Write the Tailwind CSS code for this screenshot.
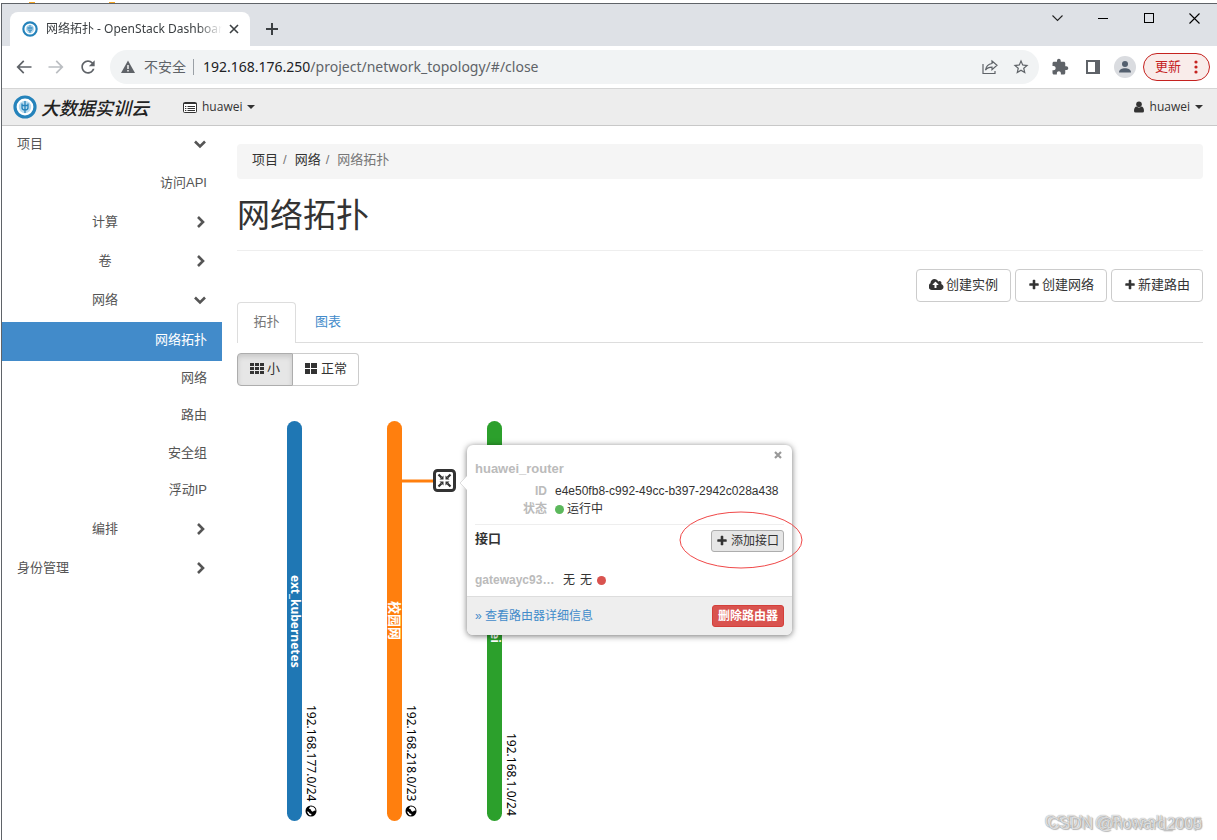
<!DOCTYPE html>
<html lang="zh-CN">
<head>
<meta charset="utf-8">
<title>网络拓扑 - OpenStack Dashboard</title>
<meta name="viewport" content="width=device-width, initial-scale=1">
<script src="https://cdn.jsdelivr.net/npm/@tailwindcss/browser@4"></script>
</head>
<body class="flex h-screen flex-col overflow-hidden bg-white font-['Liberation_Sans','Noto_Sans_CJK_SC',sans-serif] text-[13px] text-[#333]">
<svg class="hidden" aria-hidden="true">
  <defs>
    <symbol id="logo" viewBox="0 0 24 24">
      <circle cx="12" cy="12" r="10" fill="#fff" stroke="#2583bb" stroke-width="3.200"/>
      <circle cx="12" cy="12" r="6.200" fill="#b9dbee"/>
      <path d="M12 6v12M9 8.500v4q0 2.500 3 2.500t3-2.500v-4M9 10.500h6" fill="none" stroke="#2583bb" stroke-width="1.300"/>
    </symbol>
    <symbol id="plus" viewBox="0 0 1792 1792"><path fill="currentColor" d="M1600 736v192q0 40-28 68t-68 28h-416v416q0 40-28 68t-68 28h-192q-40 0-68-28t-28-68v-416h-416q-40 0-68-28t-28-68v-192q0-40 28-68t68-28h416v-416q0-40 28-68t68-28h192q40 0 68 28t28 68v416h416q40 0 68 28t28 68z"/></symbol>
    <symbol id="down" viewBox="0 0 14 14"><path d="M2 4.500l5 5 5-5" fill="none" stroke="currentColor" stroke-width="2.600"/></symbol>
    <symbol id="right" viewBox="0 0 14 14"><path d="M5 2l5 5-5 5" fill="none" stroke="currentColor" stroke-width="2.600"/></symbol>
    <symbol id="globe" viewBox="0 0 12 12">
      <circle cx="6" cy="6" r="5.500" fill="#000"/>
      <path d="M5 1.600l3 .2 2 1.700.6 2-1.600.3-1.200 1L6.500 6 5.600 4.200 4 3.800zM1.800 6.500l1.700.2 1.300 1.800 1.700.6-.4 1.300-2-.5z" fill="#fff"/>
    </symbol>
  </defs>
</svg>

<div class="flex h-[3px] flex-none items-end gap-[74px] pl-[29px]">
  <span class="h-px w-1.5 bg-[#f5a623]"></span>
  <span class="h-px w-1.5 bg-[#f5a623]"></span>
</div>

<div class="ml-px flex min-h-0 flex-1 flex-col border-t border-l border-[#5f6368]">

  <!-- Tab strip -->
  <div class="flex h-[42px] flex-none bg-[#dee1e6] pl-2">
    <div class="mt-2 flex w-60 items-center rounded-t-lg bg-white pr-2 pl-3">
      <svg class="size-4 flex-none"><use href="#logo"/></svg>
      <span class="ml-2 flex-1 overflow-hidden font-['Noto_Sans','Noto_Sans_CJK_SC',sans-serif] text-xs whitespace-nowrap text-[#3c4043] [mask-image:linear-gradient(to_right,#000_86%,transparent)]">网络拓扑 - OpenStack Dashboard</span>
      <button type="button" aria-label="关闭标签页" class="ml-1 flex size-4 items-center justify-center">
        <svg class="size-2.5" viewBox="0 0 10 10"><path d="M1 1l8 8M9 1l-8 8" stroke="#3c4043" stroke-width="1.600"/></svg>
      </button>
    </div>
    <button type="button" aria-label="新标签页" class="mt-2 ml-3 flex size-5 items-center justify-center self-center">
      <svg class="size-3" viewBox="0 0 12 12"><path d="M6 0v12M0 6h12" stroke="#3c4043" stroke-width="2"/></svg>
    </button>
    <div class="ml-auto flex h-7">
      <button type="button" aria-label="搜索标签页" class="flex w-[46px] items-center justify-center"><svg class="size-[11px]" viewBox="0 0 11 11"><path d="M.5 2.500l5 5 5-5" fill="none" stroke="#222" stroke-width="1.100"/></svg></button>
      <button type="button" aria-label="最小化" class="flex w-[46px] items-center justify-center"><span class="h-px w-2.5 bg-black"></span></button>
      <button type="button" aria-label="最大化" class="flex w-[46px] items-center justify-center"><span class="size-2.5 border border-black"></span></button>
      <button type="button" aria-label="关闭" class="flex w-[45px] items-center justify-center"><svg class="size-[11px]" viewBox="0 0 11 11"><path d="M.5.500l10 10M10.500.500l-10 10" stroke="#000" stroke-width="1.100"/></svg></button>
    </div>
  </div>

  <!-- Address bar -->
  <div class="flex h-[42px] flex-none items-center bg-white pr-[7px] pl-3 text-[#5f6368]">
    <button type="button" aria-label="后退"><svg class="size-5" viewBox="0 0 24 24" fill="currentColor"><path d="M21 11H6.830l5.590-5.590L11 4l-8 8 8 8 1.410-1.410L6.830 13H21v-2z"/></svg></button>
    <button type="button" aria-label="前进" class="ml-3 text-[#bbbec2]"><svg class="size-5" viewBox="0 0 24 24" fill="currentColor"><path d="M3 13h14.170l-5.590 5.590L13 20l8-8-8-8-1.410 1.410L17.170 11H3v2z"/></svg></button>
    <button type="button" aria-label="重新加载" class="ml-3"><svg class="size-5" viewBox="0 0 24 24" fill="currentColor"><path d="M17.650 6.350C16.200 4.900 14.210 4 12 4c-4.420 0-7.990 3.580-7.990 8s3.570 8 7.990 8c3.730 0 6.840-2.550 7.730-6h-2.080c-.82 2.330-3.040 4-5.650 4-3.310 0-6-2.690-6-6s2.690-6 6-6c1.660 0 3.140.69 4.220 1.780L13 11h7V4l-2.350 2.350z"/></svg></button>
    <div class="ml-3 flex h-[34px] min-w-0 flex-1 items-center rounded-full bg-[#f1f3f4] pr-[9px] pl-[11px]">
      <svg class="h-3.5 w-3.5 flex-none" viewBox="0 0 14 14"><path d="M7 .5L14 13H0z" fill="#5f6368"/><path d="M7 5v4M7 10v1.500" stroke="#fff" stroke-width="1.400"/></svg>
      <span class="ml-[9px] text-sm">不安全</span>
      <span class="mr-[9px] ml-[7px] h-4 w-px bg-[#9aa0a6]"></span>
      <div role="textbox" aria-label="地址栏" contenteditable="true" class="min-w-0 flex-1 overflow-hidden font-['Noto_Sans',sans-serif] text-sm whitespace-nowrap text-[#5f6368]"><span class="text-[#202124]">192.168.176.250</span>/project/network_topology/#/close</div>
      <button type="button" aria-label="分享" class="flex size-5 items-center justify-center"><svg class="size-4" viewBox="0 0 16 16" fill="none" stroke="#5f6368" stroke-width="1.200"><path d="M1 5v9.500h12V12"/><path d="M10 2l5 4.300-5 4.300V8.200C7 8.200 5 9 3.500 11.200 4 7.500 6.200 5 10 4.500z"/></svg></button>
      <button type="button" aria-label="收藏" class="ml-3"><svg class="size-[18px]" viewBox="0 0 24 24" fill="#5f6368"><path d="M22 9.240l-7.190-.62L12 2 9.190 8.630 2 9.240l5.460 4.730L5.820 21 12 17.270 18.180 21l-1.630-7.030L22 9.240zM12 15.400l-3.760 2.270 1-4.280-3.320-2.880 4.380-.38L12 6.100l1.710 4.040 4.380.38-3.320 2.880 1 4.280L12 15.400z"/></svg></button>
    </div>
    <button type="button" aria-label="扩展程序" class="ml-3"><svg class="size-[18px]" viewBox="0 0 24 24" fill="currentColor"><path d="M20.500 11H19V7c0-1.100-.9-2-2-2h-4V3.500C13 2.120 11.880 1 10.500 1S8 2.120 8 3.500V5H4c-1.100 0-1.990.9-1.990 2v3.800H3.500c1.490 0 2.700 1.210 2.700 2.700s-1.210 2.700-2.700 2.700H2V20c0 1.100.9 2 2 2h3.800v-1.500c0-1.490 1.210-2.700 2.700-2.700 1.490 0 2.700 1.210 2.700 2.700V22H17c1.100 0 2-.9 2-2v-4h1.500c1.380 0 2.500-1.120 2.500-2.500S21.880 11 20.500 11z"/></svg></button>
    <button type="button" aria-label="侧边栏" class="ml-[17px]"><svg class="size-3.5" viewBox="0 0 14 14"><path d="M1 1h12v12H1z" fill="none" stroke="#5f6368" stroke-width="2"/><path d="M9 0h5v14H9z" fill="#5f6368"/></svg></button>
    <button type="button" aria-label="用户" class="ml-3.5 flex size-[22px] items-center justify-center rounded-full bg-[#dadce0]"><svg class="size-4" viewBox="0 0 16 16" fill="#54606f"><circle cx="8" cy="5" r="3"/><path d="M2 13.500c0-3 3-4.200 6-4.200s6 1.200 6 4.200z"/></svg></button>
    <button type="button" class="ml-[7px] flex h-7 w-[67px] items-center rounded-full border border-[#c5221f] bg-[#f9ecea] pl-[11px] text-[13px] text-[#c5221f]">更新
      <svg class="ml-[7px] size-4" viewBox="0 0 16 16" fill="currentColor"><circle cx="8" cy="3" r="1.600"/><circle cx="8" cy="8" r="1.600"/><circle cx="8" cy="13" r="1.600"/></svg>
    </button>
  </div>

  <!-- Dashboard navbar -->
  <nav class="flex h-[38px] flex-none items-center border-y border-t-[#d5d5d5] border-b-[#c8c8c8] bg-[#ededed] pr-[14px] pl-[11px] font-['Open_Sans',sans-serif] text-xs">
    <a href="#" class="flex items-center text-[#222]">
      <svg class="size-6"><use href="#logo"/></svg>
      <span class="ml-1 font-['Noto_Sans_CJK_SC',sans-serif] text-lg font-medium italic">大数据实训云</span>
    </a>
    <button type="button" class="ml-[34px] flex items-center gap-[5px]">
      <svg class="h-[11px] w-3.5" viewBox="0 0 14 11"><rect x=".5" y=".5" width="13" height="10" rx="1" fill="#fff" stroke="#333"/><path d="M.5 1.500h13M2 4.500h1.300M4.500 4.500H12M2 6.500h1.300M4.500 6.500H12M2 8.500h1.300M4.500 8.500H12" stroke="#333"/></svg>
      <span>huawei</span>
      <span class="border-x-4 border-t-4 border-x-transparent border-t-[#333]"></span>
    </button>
    <button type="button" class="ml-auto flex items-center gap-[5px]">
      <svg class="size-3" viewBox="0 0 12 12" fill="#333"><circle cx="6" cy="3.200" r="2.800"/><path d="M1 10c0-3 1.200-4.200 2.600-4.400Q6 7.500 8.400 5.600C9.800 5.800 11 7 11 10q0 1.600-1.600 1.600H2.600Q1 11.600 1 10z"/></svg>
      <span>huawei</span>
      <span class="border-x-4 border-t-4 border-x-transparent border-t-[#333]"></span>
    </button>
  </nav>

  <div class="flex min-h-0 flex-1">
    <!-- Sidebar -->
    <aside class="w-[220px] flex-none text-[#555]">
      <ul>
        <li><a href="#" class="flex h-[39px] items-center justify-between px-[15px] pb-[3px]">项目<svg class="size-3.5"><use href="#down"/></svg></a></li>
        <li><a href="#" class="flex h-[39px] items-center justify-end px-[15px] pb-[3px]">访问API</a></li>
        <li><a href="#" class="flex h-[39px] items-center px-[15px] pb-[3px]"><span class="flex-1 text-center">计算</span><svg class="size-3.5"><use href="#right"/></svg></a></li>
        <li><a href="#" class="flex h-[39px] items-center px-[15px] pb-[3px]"><span class="flex-1 text-center">卷</span><svg class="size-3.5"><use href="#right"/></svg></a></li>
        <li>
          <a href="#" class="flex h-[39px] items-center px-[15px] pb-[3px]"><span class="flex-1 text-center">网络</span><svg class="size-3.5"><use href="#down"/></svg></a>
          <ul class="py-px">
            <li><a href="#" aria-current="page" class="flex h-[39px] items-center justify-end bg-[#428bca] px-[15px] pb-[3px] text-white">网络拓扑</a></li>
            <li><a href="#" class="flex h-[37px] items-center justify-end px-[15px] pb-[3px]">网络</a></li>
            <li><a href="#" class="flex h-[37px] items-center justify-end px-[15px] pb-[3px]">路由</a></li>
            <li><a href="#" class="flex h-[38px] items-center justify-end px-[15px] pb-[3px]">安全组</a></li>
            <li><a href="#" class="flex h-[37px] items-center justify-end px-[15px] pb-[3px]">浮动IP</a></li>
          </ul>
        </li>
        <li><a href="#" class="flex h-[39px] items-center px-[15px] pb-[3px]"><span class="flex-1 text-center">编排</span><svg class="size-3.5"><use href="#right"/></svg></a></li>
        <li><a href="#" class="flex h-[39px] items-center justify-between px-[15px] pb-[3px]">身份管理<svg class="size-3.5"><use href="#right"/></svg></a></li>
      </ul>
    </aside>

    <!-- Content -->
    <main class="min-w-0 flex-1 pt-[18px] pr-[14px] pl-[15px]">
      <ol class="flex h-[35px] items-center gap-[3px] rounded bg-[#f5f5f5] px-[15px] pb-[3px]">
        <li><a href="#">项目</a><span class="px-[5px] text-[#777]">/</span></li>
        <li><a href="#">网络</a><span class="px-[5px] text-[#777]">/</span></li>
        <li class="text-[#777]">网络拓扑</li>
      </ol>
      <h1 class="h-[72px] border-b border-[#eee] pt-[17px] text-[33px] leading-10">网络拓扑</h1>

      <div class="mt-[18px] flex justify-end gap-1">
        <button type="button" class="flex h-[33px] items-center gap-0.5 rounded border border-[#ccc] px-3 pb-0.5"><svg class="h-3.5 w-[15px]" viewBox="0 0 1920 1792" fill="currentColor"><path d="M1216 864q0-14-9-23l-352-352q-9-9-23-9t-23 9l-351 351q-10 12-10 24 0 14 9 23t23 9h224v352q0 13 9.500 22.500t22.500 9.500h192q13 0 22.500-9.500t9.500-22.500v-352h224q13 0 22.500-9.500t9.500-22.500zm640 288q0 159-112.500 271.500t-271.500 112.500h-1088q-185 0-316.500-131.500t-131.500-316.500q0-130 70-240t188-165q-2-30-2-43 0-212 150-362t362-150q156 0 285.500 87t188.500 231q71-62 166-62 106 0 181 75t75 181q0 76-41 138 130 31 213.500 135.500t83.500 238.500z" fill-rule="evenodd"/></svg>创建实例</button>
        <button type="button" class="flex h-[33px] items-center gap-0.5 rounded border border-[#ccc] px-3 pb-0.5"><svg class="size-3"><use href="#plus"/></svg>创建网络</button>
        <button type="button" class="flex h-[33px] items-center gap-0.5 rounded border border-[#ccc] px-3 pb-0.5"><svg class="size-3"><use href="#plus"/></svg>新建路由</button>
      </div>

      <div class="flex h-[41px] border-b border-[#ddd]">
        <a href="#" class="-mb-px flex w-[59px] items-center justify-center rounded-t border border-b-0 border-[#ddd] bg-white pb-[3px] text-[#777]">拓扑</a>
        <a href="#" class="flex w-16 items-center justify-center pb-px text-[#428bca]">图表</a>
      </div>

      <div class="mt-2.5 flex">
        <button type="button" aria-pressed="true" class="flex h-[33px] w-14 items-center justify-center gap-[3px] rounded-l border border-[#adadad] bg-[#e6e6e6] pb-0.5 shadow-[inset_0_3px_5px_rgba(0,0,0,0.125)]"><svg class="h-3.5 w-3.5" viewBox="0 0 14 14" fill="#333"><path d="M0 1h4v3H0zM5 1h4v3H5zM10 1h4v3h-4zM0 5h4v3H0zM5 5h4v3H5zM10 5h4v3h-4zM0 9h4v3H0zM5 9h4v3H5zM10 9h4v3h-4z"/></svg>小</button>
        <button type="button" aria-pressed="false" class="flex h-[33px] w-[66px] items-center justify-center gap-[3px] rounded-r border border-l-0 border-[#ccc] bg-white pb-0.5"><svg class="h-3.5 w-3.5" viewBox="0 0 14 14" fill="#333"><path d="M1 1h5v5H1zM7 1h6v5H7zM1 7h5v5H1zM7 7h6v5H7z"/></svg>正常</button>
      </div>

      <!-- Topology canvas -->
      <div class="relative flex gap-[60px] pt-[35px] pl-[50px] font-['Noto_Sans','Noto_Sans_CJK_SC',sans-serif] text-xs">
        <div class="flex h-[400px] w-10">
          <div class="flex w-[15px] items-center justify-center rounded-full bg-[#1f77b4] font-bold text-white [text-orientation:sideways] [writing-mode:vertical-rl]">ext_kubernetes</div>
          <div class="flex w-[18px] items-center justify-end gap-1 pb-1 text-black [writing-mode:vertical-rl]">192.168.177.0/24<svg class="size-3"><use href="#globe"/></svg></div>
        </div>
        <div class="flex h-[400px] w-10">
          <div class="flex w-[15px] items-center justify-center rounded-full bg-[#ff7f0e] text-[13px] font-bold text-white [text-orientation:sideways] [writing-mode:vertical-rl]">校园网</div>
          <div class="flex w-[18px] items-center justify-end gap-1 pb-1 text-black [writing-mode:vertical-rl]">192.168.218.0/23<svg class="size-3"><use href="#globe"/></svg></div>
        </div>
        <div class="flex h-[400px] w-10">
          <div class="flex w-[15px] items-center justify-center rounded-full bg-[#2ca02c] font-bold text-white [text-orientation:sideways] [writing-mode:vertical-rl]">huawei</div>
          <div class="flex w-[18px] items-center justify-end pb-[5px] text-black [writing-mode:vertical-rl]">192.168.1.0/24</div>
        </div>

        <svg class="absolute top-[82px] left-[165px] h-[26px] w-[57px]" viewBox="0 0 57 26">
          <path d="M0 13h32" stroke="#ff7f0e" stroke-width="3"/>
          <rect x="32.500" y="2.500" width="20" height="20" rx="3" fill="#fff" stroke="#333" stroke-width="3"/>
          <path d="M36.500 6.500l3 3M48.500 6.500l-3 3M36.500 18.500l3-3M48.500 18.500l-3-3" stroke="#333" stroke-width="2.200"/>
          <path d="M41.500 7.500v4h-4zM43.500 7.500v4h4zM41.500 17.500v-4h-4zM43.500 17.500v-4h4z" fill="#333"/>
        </svg>

        <!-- Router balloon -->
        <section class="absolute top-[59px] left-[230px] w-[325px] rounded-md bg-white font-['Liberation_Sans','Noto_Sans_CJK_SC',sans-serif] text-[#333] shadow-[0_1px_6px_rgba(0,0,0,0.55)]">
          <svg class="absolute top-[31px] -left-2 h-3.5 w-2" viewBox="0 0 8 14"><path d="M8 0L1 7l7 7z" fill="#fff"/><path d="M8 0L1 7l7 7" fill="none" stroke="#ddd"/></svg>
          <button type="button" aria-label="关闭" class="absolute top-1.5 right-2.5"><svg class="size-2" viewBox="0 0 8 8"><path d="M1 1l6 6M7 1L1 7" stroke="#999" stroke-width="2.200"/></svg></button>
          <div class="px-2 pt-[15px] pb-1.5">
            <h2 class="text-[13px] leading-[18px] font-bold text-[#bbb]">huawei_router</h2>
            <dl class="mt-1 grid grid-cols-[72px_1fr] gap-x-2 leading-[18px]">
              <dt class="text-right font-bold text-[#bbb]">ID</dt><dd>e4e50fb8-c992-49cc-b397-2942c028a438</dd>
              <dt class="text-right font-bold text-[#bbb]">状态</dt><dd class="flex items-center gap-[3px]"><span class="size-[9px] rounded-full bg-[#5cb85c]"></span>运行中</dd>
            </dl>
            <div class="mt-1.5 flex justify-between border-t border-[#eee] pt-[5px]">
              <h3 class="text-[13px] leading-[18px] font-bold">接口</h3>
              <button type="button" class="flex h-[22px] items-center gap-[3px] rounded-[3px] border border-[#adadad] bg-[#e6e6e6] px-1 pb-px text-xs"><svg class="size-3"><use href="#plus"/></svg>添加接口</button>
            </div>
            <div class="mt-[18px] flex h-5 items-center">
              <span class="w-20 font-bold text-[#bbb]">gatewayc93…</span>
              <span class="ml-2">无</span><span class="ml-[5px]">无</span><span class="ml-[5px] size-[9px] rounded-full bg-[#d9534f]"></span>
            </div>
          </div>
          <footer class="flex h-[39px] items-center justify-between rounded-b-md border-t border-[#ddd] bg-[#eee] px-2">
            <a href="#" class="pb-px text-[#428bca]">» 查看路由器详细信息</a>
            <button type="button" class="flex h-[22px] items-center rounded-[3px] border border-[#d43f3a] bg-[#d9534f] px-[5px] text-xs font-bold text-white">删除路由器</button>
          </footer>
        </section>

        <svg class="absolute top-[125px] left-[442px] h-[58px] w-[124px]" viewBox="0 0 124 58"><ellipse cx="62" cy="29" rx="61" ry="28" fill="none" stroke="#f04848"/></svg>
      </div>
    </main>
  </div>
</div>

<div class="absolute right-[15px] bottom-1 grid justify-items-end text-base leading-6 whitespace-nowrap text-white/70 [text-shadow:0_0_1px_#888,1px_1px_1px_#bbb]">
  <span class="col-start-1 row-start-1 pb-0.5">CSDN @Russell_mvp</span>
  <span class="col-start-1 row-start-1 pt-0.5">CSDN @howard2005</span>
</div>
</body>
</html>
